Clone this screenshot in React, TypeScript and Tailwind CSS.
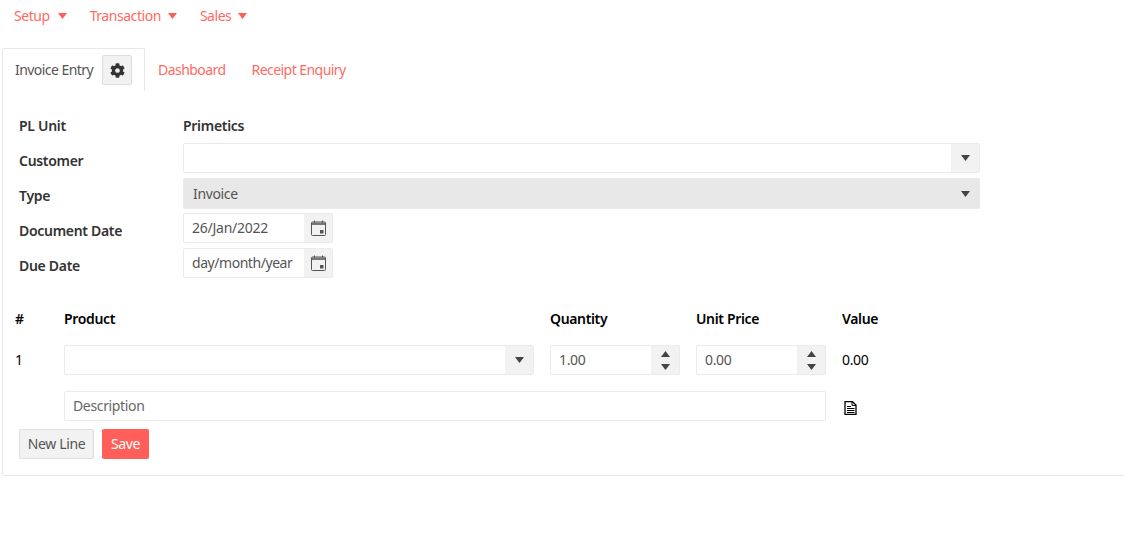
import React from "react";
import { FaCog } from "react-icons/fa";

const Caret = ({ className = "" }: { className?: string }) => (
  <svg width="9" height="6" viewBox="0 0 9 6" className={className}>
    <path d="M0 0H9L4.5 6Z" fill="currentColor" />
  </svg>
);

const Up = () => (
  <svg width="9" height="6" viewBox="0 0 9 6"><path d="M0 6H9L4.5 0Z" fill="#444" /></svg>
);

const Calendar = () => (
  <svg width="15" height="16" viewBox="0 0 15 16" fill="none">
    <path d="M3.5 0.5V3M11.5 0.5V3" stroke="#555" strokeWidth="1" />
    <rect x="0.5" y="2" width="14" height="13.5" rx="1" stroke="#555" strokeWidth="1" />
    <rect x="1" y="2.5" width="13" height="2.5" fill="#777" />
    <rect x="9" y="10" width="3.5" height="3.5" fill="#555" />
  </svg>
);

const Doc = () => (
  <svg width="13" height="14" viewBox="0 0 13 14" fill="none">
    <path d="M1 0.7H8.4L12 4V13.3H1Z" stroke="#000" strokeWidth="1.3" />
    <path d="M8 1V4.4H12" stroke="#000" strokeWidth="1" />
    <path d="M3 5.5H7M3 7.5H10.5M3 9.5H10.5M3 11.5H10.5" stroke="#000" strokeWidth="1.2" />
  </svg>
);

const Select = ({ value = "", className = "", disabled = false }: { value?: string; className?: string; disabled?: boolean }) => (
  <div className={`flex h-[30px] items-center rounded-[2px] border border-[#ebebeb] ${disabled ? "bg-[#e8e8e8]" : "bg-white"} ${className}`}>
    <span className="flex-1 pl-[9px] text-[#555]">{value}</span>
    <span className={`flex h-full w-[28px] items-center justify-center text-[#444] ${disabled ? "" : "bg-[#f2f2f2]"}`}>
      <Caret />
    </span>
  </div>
);

const DateInput = ({ value, className = "" }: { value: string; className?: string }) => (
  <div className="flex h-[30px] w-[150px] items-center rounded-[2px] border border-[#ebebeb] bg-white">
    <span className={`flex-1 pl-[8px] text-[#555] ${className}`}>{value}</span>
    <span className="flex h-full w-[28px] items-center justify-center bg-[#f2f2f2]">
      <Calendar />
    </span>
  </div>
);

const NumberInput = ({ value }: { value: string }) => (
  <div className="flex h-[30px] w-[130px] items-center rounded-[2px] border border-[#ebebeb] bg-white">
    <span className="flex-1 pl-[8px] text-[#555]">{value}</span>
    <span className="flex h-full w-[28px] flex-col items-center justify-center gap-[7px] bg-[#f2f2f2]">
      <Up />
      <Caret className="text-[#444]" />
    </span>
  </div>
);

const Row = ({ label, children, className = "" }: { label: string; children: React.ReactNode; className?: string }) => (
  <div className={`flex items-center ${className}`}>
    <span className="w-[164px] pt-[5px] font-semibold tracking-[-0.3px] text-[#333]">{label}</span>
    {children}
  </div>
);

export default function App() {
  return (
    <div className="h-[548px] w-[1124px] overflow-hidden bg-white pl-[2px] text-[14px] leading-[20px] font-['Noto_Sans','Open_Sans',sans-serif] tracking-[-0.35px]">
      <nav className="flex h-[48px] items-start pt-[6px] pl-[12px] tracking-[-0.45px] text-[#ff6a63]">
        <span className="flex items-center gap-[8px]">Setup <Caret className="text-[#ff5f58]" /></span>
        <span className="ml-[23px] flex items-center gap-[7px]">Transaction <Caret className="text-[#ff5f58]" /></span>
        <span className="ml-[23px] flex items-center gap-[7px]">Sales <Caret className="text-[#ff5f58]" /></span>
      </nav>
      <div className="flex h-[43px] items-center tracking-[-0.55px]">
        <div className="relative z-10 flex h-[43px] w-[143px] items-center self-start rounded-t-[2px] border border-b-0 border-[#e8e8e8] bg-white pl-[12px] text-[#555]">
          <span className="w-[87px]">Invoice Entry</span>
          <span className="flex h-[30px] w-[30px] items-center justify-center rounded-[2px] border border-[#ddd] bg-[#f2f2f2] text-[#333]">
            <FaCog size={15} />
          </span>
        </div>
        <span className="ml-[13px] text-[#ff6a63]">Dashboard</span>
        <span className="ml-[26px] text-[#ff6a63]">Receipt Enquiry</span>
      </div>
      <div className="h-[385px] w-[1130px] rounded-b-[2px] border border-t-0 border-[#e8e8e8] pt-[22px] pl-[16px]">
        <Row label="PL Unit" className="h-[20px]">
          <span className="pt-[5px] font-semibold tracking-[-0.3px] text-[#333]">Primetics</span>
        </Row>
        <Row label="Customer" className="mt-[10px]"><Select className="w-[797px]" /></Row>
        <Row label="Type" className="mt-[5px]"><Select value="Invoice" disabled className="h-[31px] w-[797px]" /></Row>
        <Row label="Document Date" className="mt-[4px]"><DateInput value="26/Jan/2022" className="tracking-[-0.25px]" /></Row>
        <Row label="Due Date" className="mt-[5px]"><DateInput value="day/month/year" className="tracking-[-0.45px]" /></Row>

        <div className="-ml-[4px] mt-[31px] flex h-[20px] items-center font-semibold text-black">
          <span className="w-[49px]">#</span>
          <span className="w-[486px]">Product</span>
          <span className="w-[146px]">Quantity</span>
          <span className="w-[146px]">Unit Price</span>
          <span>Value</span>
        </div>
        <div className="-ml-[4px] mt-[16px] flex items-center">
          <span className="w-[49px] text-black">1</span>
          <Select className="w-[470px]" />
          <span className="ml-[16px]"><NumberInput value="1.00" /></span>
          <span className="ml-[16px]"><NumberInput value="0.00" /></span>
          <span className="ml-[16px] text-black">0.00</span>
        </div>
        <div className="-ml-[4px] mt-[16px] flex items-center">
          <div className="ml-[49px] flex h-[30px] w-[762px] items-center rounded-[2px] border border-[#ebebeb] bg-white pl-[8px] text-[#666]">Description</div>
          <span className="ml-[18px] mt-[4px] flex"><Doc /></span>
        </div>
        <div className="mt-[8px] flex gap-[8px]">
          <button className="h-[30px] w-[75px] rounded-[2px] border border-[#ddd] bg-[#f2f2f2] text-[#555]">New Line</button>
          <button className="h-[30px] w-[47px] rounded-[2px] bg-[#ff5f58] text-white">Save</button>
        </div>
      </div>
    </div>
  );
}
